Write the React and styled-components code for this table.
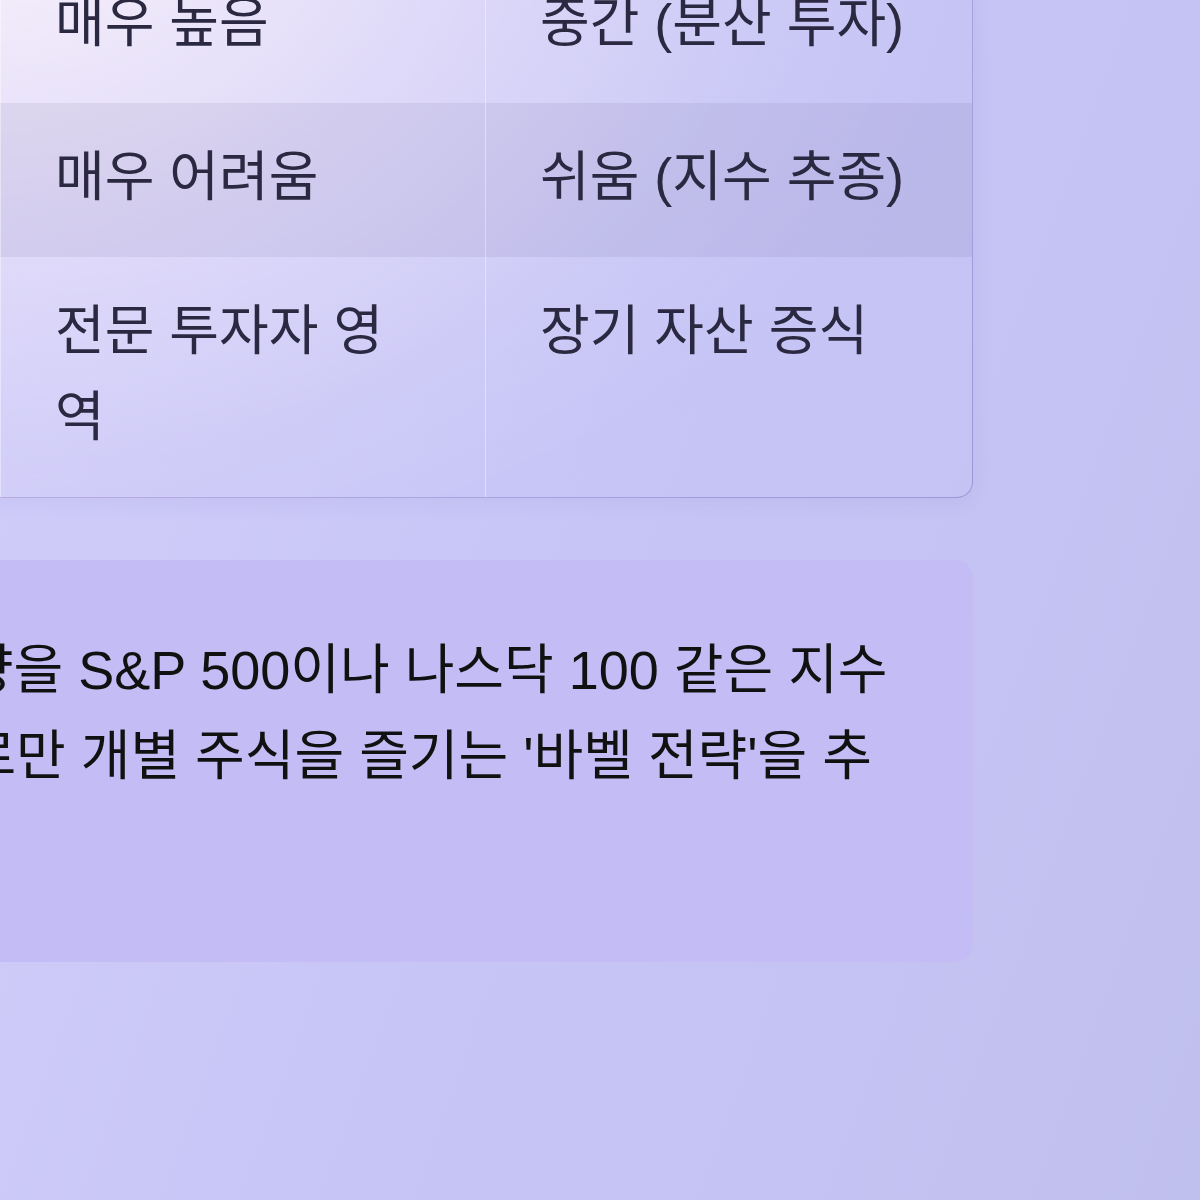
import React from "react";
import styled, { createGlobalStyle } from "styled-components";

const GlobalStyle = createGlobalStyle`
  html, body {
    margin: 0;
    padding: 0;
  }
  body {
    font-family: "Liberation Sans", "Noto Sans CJK KR", sans-serif;
  }
`;

const rows = [
  ["변동성", "매우 높음", "중간 (분산 투자)"],
  ["시장 초과 수익", "매우 어려움", "쉬움 (지수 추종)"],
  ["추천 대상", "전문 투자자 영역", "장기 자산 증식"],
];

function App() {
  return (
    <Page>
      <GlobalStyle />
      <Content>
        <TableWrap>
          <Table>
            <colgroup>
              <col style={{ width: 486 }} />
              <col style={{ width: 485 }} />
              <col style={{ width: 486 }} />
            </colgroup>
            <thead>
              <tr>
                <HeadCell>구분</HeadCell>
                <HeadCell>개별 주식 투자</HeadCell>
                <HeadCell>지수 투자 (ETF)</HeadCell>
              </tr>
            </thead>
            <tbody>
              {rows.map((r) => (
                <Row key={r[0]}>
                  {r.map((c) => (
                    <Cell key={c}>{c}</Cell>
                  ))}
                </Row>
              ))}
            </tbody>
          </Table>
        </TableWrap>
        <Callout>
          우선 자산의 상당량을 S&P 500이나 나스닥 100 같은 지수 ETF에 두고
          일부로만 개별 주식을 즐기는 '바벨 전략'을 추천합니다.
        </Callout>
      </Content>
    </Page>
  );
}

const Page = styled.div`
  min-height: 1200px;
  overflow: hidden;
  background: linear-gradient(110deg, #d2cefa 0%, #c7c5f6 50%, #c0c0ee 100%);
`;

const Content = styled.main`
  width: 1459px;
  margin: -206px 0 0 -486px;
  display: flex;
  flex-direction: column;
  gap: 62px;
`;

const TableWrap = styled.div`
  border: 1px solid rgba(110, 100, 190, 0.45);
  border-radius: 16px;
  overflow: hidden;
  background: radial-gradient(
    1060px 740px at 486px 106px,
    rgba(252, 244, 250, 0.92) 0%,
    rgba(252, 244, 250, 0.4) 42%,
    rgba(252, 244, 250, 0.08) 75%,
    rgba(252, 244, 250, 0) 95%
  );
  box-shadow: 0 6px 20px rgba(90, 80, 170, 0.07);
`;

const Table = styled.table`
  width: 100%;
  border-collapse: separate;
  border-spacing: 0;
  table-layout: fixed;
`;

const Row = styled.tr`
  &:nth-child(even) {
    background: rgba(60, 55, 110, 0.08);
  }
`;

const Cell = styled.td`
  padding: 31px 56px 37px 54px;
  font-size: 54px;
  line-height: 86px;
  color: #2b2841;
  text-align: left;
  vertical-align: top;
  border-right: 1px solid rgba(255, 255, 255, 0.4);
  &:last-child {
    border-right: none;
  }
`;

const HeadCell = styled(Cell).attrs({ as: "th" })`
  font-weight: 700;
  background: rgba(110, 90, 220, 0.12);
`;

const Callout = styled.div`
  background: #c4bcf5;
  border-radius: 18px;
  padding: 67px 72px 77px;
  font-size: 54px;
  line-height: 86px;
  color: #111;
`;

export default App;
